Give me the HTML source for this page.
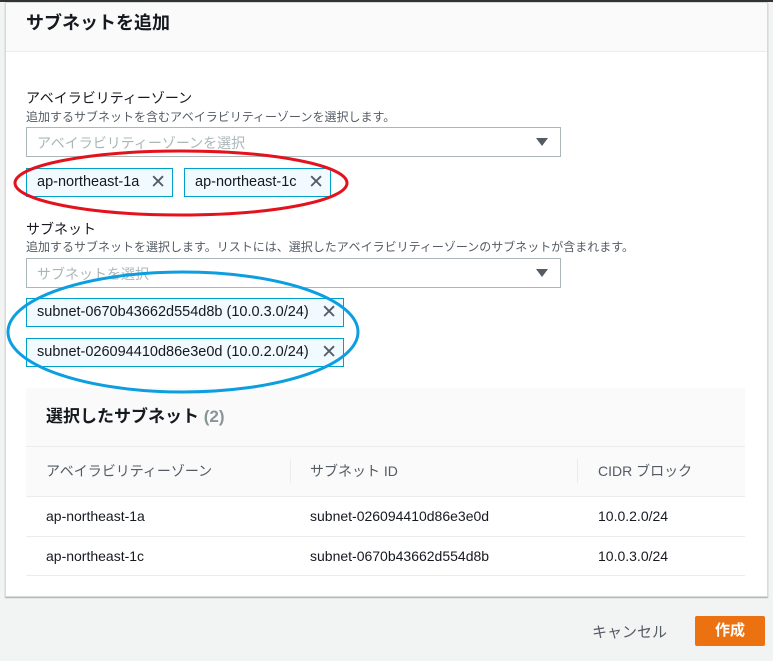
<!DOCTYPE html>
<html><head><meta charset="utf-8"><style>
*{margin:0;padding:0;box-sizing:border-box}
body{width:773px;height:661px;background:#f2f3f3;font-family:"Liberation Sans","Noto Sans CJK JP",sans-serif;color:#16191f;position:relative;overflow:hidden}
.top{position:absolute;left:0;top:0;width:773px;height:2px;background:#333}
.card{position:absolute;left:5px;top:2px;width:763px;height:595px;background:#fff;border:1px solid #d5dbdb;box-shadow:0 1px 1px rgba(0,0,0,.3)}
.hdr{height:49px;background:#fafafa;border-bottom:1px solid #eaeded;padding:6px 20px;font-size:18px;font-weight:bold}
.abs{position:absolute}
.lbl{font-size:14px}
.desc{font-size:12px;color:#545b64}
.sel{position:absolute;left:20px;width:535px;height:30px;border:1px solid #aab7b8;font-size:14px;color:#aab7b8;padding:5px 10px}
.sel:after{content:"";position:absolute;right:12px;top:10px;border-left:6px solid transparent;border-right:6px solid transparent;border-top:8px solid #545b64}
.tok{position:absolute;height:29px;border:1px solid #00a1c9;background:#f1faff;font-size:14.5px;padding:5px 10px;white-space:nowrap}
.tok b{font-weight:normal;font-size:19px;position:absolute;right:6px;top:2px;color:#545b64;line-height:24px}
.tbl{position:absolute;left:20px;top:385px;width:719px;height:188px;background:#fafafa}
.row{position:absolute;left:0;width:719px;height:40px;border-top:1px solid #eaeded;background:#fff;font-size:14px}
.row span,.th span{position:absolute;top:11px}
</style></head><body>
<div class="top"></div>
<div class="card">
<div class="hdr">サブネットを追加</div>
<div class="abs lbl" style="left:20px;top:85px">アベイラビリティーゾーン</div>
<div class="abs desc" style="left:20px;top:105px">追加するサブネットを含むアベイラビリティーゾーンを選択します。</div>
<div class="sel" style="top:124px">アベイラビリティーゾーンを選択</div>
<div class="tok" style="left:20px;top:165px;width:147px">ap-northeast-1a<b>✕</b></div>
<div class="tok" style="left:178px;top:165px;width:147px">ap-northeast-1c<b>✕</b></div>
<div class="abs lbl" style="left:20px;top:216px">サブネット</div>
<div class="abs desc" style="left:20px;top:235px">追加するサブネットを選択します。リストには、選択したアベイラビリティーゾーンのサブネットが含まれます。</div>
<div class="sel" style="top:255px">サブネットを選択</div>
<div class="tok" style="left:20px;top:295px;width:318px">subnet-0670b43662d554d8b (10.0.3.0/24)<b>✕</b></div>
<div class="tok" style="left:20px;top:335px;width:318px">subnet-026094410d86e3e0d (10.0.2.0/24)<b>✕</b></div>
<div class="tbl">
<div class="abs" style="left:20px;top:14px;font-size:17px;font-weight:bold">選択したサブネット <span style="color:#879596">(2)</span></div>
<div class="row th" style="top:58px;background:#fafafa;height:50px;color:#545b64"><span style="left:20px;top:14px">アベイラビリティーゾーン</span><span style="left:284px;top:14px">サブネット ID</span><span style="left:572px;top:14px">CIDR ブロック</span>
<i style="position:absolute;left:264px;top:12px;width:1px;height:24px;background:#eaeded"></i><i style="position:absolute;left:551px;top:12px;width:1px;height:24px;background:#eaeded"></i></div>
<div class="row" style="top:108px"><span style="left:20px">ap-northeast-1a</span><span style="left:284px">subnet-026094410d86e3e0d</span><span style="left:572px">10.0.2.0/24</span></div>
<div class="row" style="top:148px;border-bottom:1px solid #eaeded"><span style="left:20px">ap-northeast-1c</span><span style="left:284px">subnet-0670b43662d554d8b</span><span style="left:572px">10.0.3.0/24</span></div>
</div>
</div>
<div class="abs" style="left:592px;top:621px;font-size:15px;color:#545b64">キャンセル</div>
<div class="abs" style="left:695px;top:616px;width:70px;height:30px;background:#ec7211;color:#fff;font-weight:bold;font-size:15px;text-align:center;line-height:30px;border-radius:2px">作成</div>
<svg class="abs" style="left:0;top:0" width="773" height="661">
<ellipse cx="181" cy="183" rx="166" ry="32" fill="none" stroke="#e3121c" stroke-width="3"/>
<ellipse cx="183" cy="332" rx="175" ry="60" fill="none" stroke="#0d9ee0" stroke-width="3"/>
</svg>
</body></html>
